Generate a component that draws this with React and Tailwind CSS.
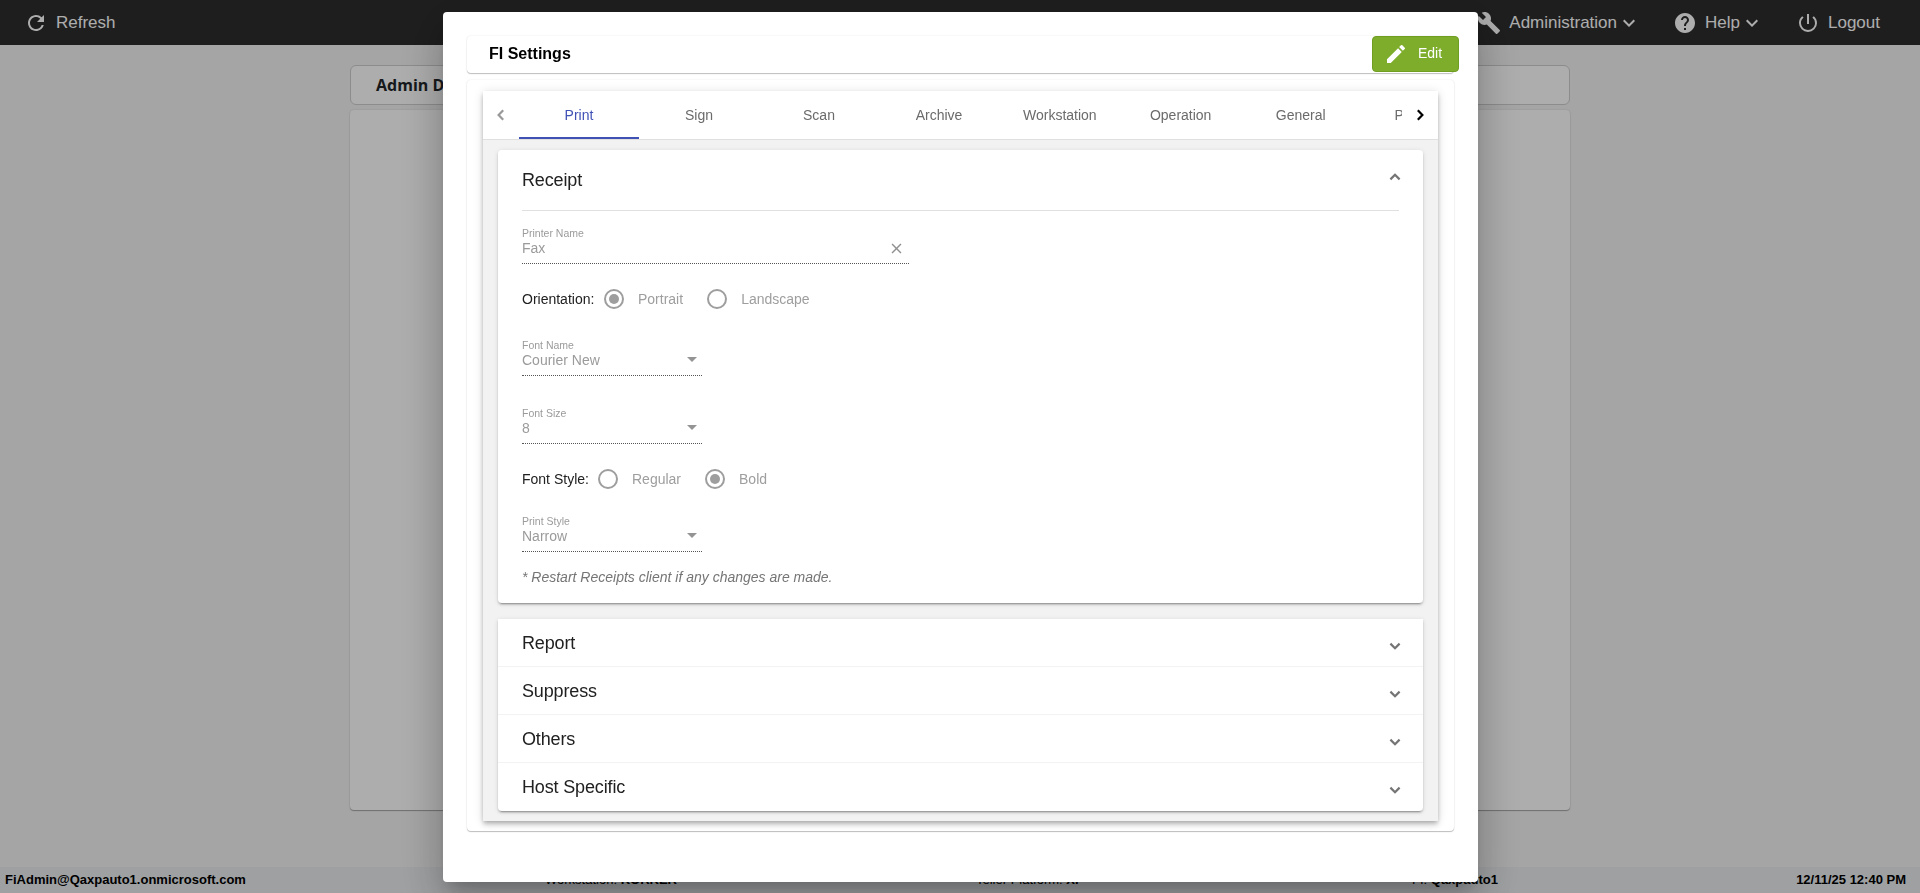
import {
  MdBuild,
  MdClose,
  MdEdit,
  MdExpandMore,
  MdHelp,
  MdPowerSettingsNew,
  MdRefresh,
} from "react-icons/md";

const TABS = [
  "Print",
  "Sign",
  "Scan",
  "Archive",
  "Workstation",
  "Operation",
  "General",
  "Platform",
];

const COLLAPSED_PANELS = ["Report", "Suppress", "Others", "Host Specific"];

/**
 * Small stroked chevron used by the tab paginator and the expansion panels
 */
function Chevron({ direction, className }) {
  const paths = {
    left: "M10.2 3.2 5.6 8l4.6 4.8",
    right: "M5.8 3.2 10.4 8l-4.6 4.8",
    up: "M3.4 10.4 8 5.8l4.6 4.6",
    down: "M3.4 5.6 8 10.2l4.6-4.6",
  };
  return (
    <svg
      viewBox="0 0 16 16"
      className={`h-4 w-4 ${className}`}
      fill="none"
      stroke="currentColor"
      strokeWidth="2.2"
    >
      <path d={paths[direction]} />
    </svg>
  );
}

function TopBar() {
  return (
    <header className="flex h-[45px] shrink-0 items-center justify-between bg-[#2d2d2d] pr-10 pl-6 text-[17px] leading-5 text-white">
      <div className="flex items-center gap-2">
        <MdRefresh className="size-6" />
        <span>Refresh</span>
      </div>
      <nav className="flex items-center">
        <div className="flex items-center">
          <MdBuild className="size-6" />
          <span className="ml-2">Administration</span>
          <MdExpandMore className="size-6" />
        </div>
        <div className="ml-8 flex items-center">
          <MdHelp className="size-6" />
          <span className="ml-2">Help</span>
          <MdExpandMore className="size-6" />
        </div>
        <div className="ml-8 flex items-center">
          <MdPowerSettingsNew className="size-6" />
          <span className="ml-2">Logout</span>
        </div>
      </nav>
    </header>
  );
}

function StatusBar() {
  return (
    <footer className="flex h-[26px] shrink-0 items-center bg-[#e9ecef] pr-3.5 pl-[5px] text-[13px] leading-4 text-black">
      <span className="w-[540px] font-bold">
        FiAdmin@Qaxpauto1.onmicrosoft.com
      </span>
      <span className="w-[431px]">
        Workstation: <b>KORKER</b>
      </span>
      <span className="w-[436px]">
        Teller Platform: <b>XP</b>
      </span>
      <span>
        FI: <b>Qaxpauto1</b>
      </span>
      <span className="ml-auto font-bold">12/11/25 12:40 PM</span>
    </footer>
  );
}

/**
 * Disabled form field with a floating label and a dotted underline
 */
function Field({ label, value, className, children }) {
  return (
    <div
      className={`flex items-end justify-between border-b border-dotted border-[#555555] pb-1.5 ${className}`}
    >
      <div className="text-[#9b9b9b]">
        <div className="text-[10.5px] leading-3">{label}</div>
        <div className="text-sm leading-[18px]">{value}</div>
      </div>
      {children}
    </div>
  );
}

function SelectField({ label, value, className }) {
  return (
    <Field label={label} value={value} className={`w-[180px] ${className}`}>
      <svg
        viewBox="0 0 10 5"
        className="mr-[5px] mb-[7px] h-[5px] w-2.5 text-[#949494]"
        fill="currentColor"
      >
        <path d="M0 0h10L5 5z" />
      </svg>
    </Field>
  );
}

function RadioRow({ label, options, value, labelClass, className }) {
  return (
    <div className={`flex h-6 items-center text-sm leading-5 ${className}`}>
      <span className={`text-[#212121] ${labelClass}`}>{label}</span>
      <div className="flex gap-6">
        {options.map((option) => (
          <div key={option} className="flex items-center gap-3.5">
            <span className="flex size-5 items-center justify-center rounded-full border-2 border-[#9e9e9e]">
              {option === value && (
                <span className="size-2.5 rounded-full bg-[#9e9e9e]" />
              )}
            </span>
            <span className="text-[#9e9e9e]">{option}</span>
          </div>
        ))}
      </div>
    </div>
  );
}

function ReceiptPanel() {
  return (
    <section className="h-[453px] rounded bg-white px-6 shadow-[0_3px_1px_-2px_rgba(0,0,0,0.2),0_2px_2px_0_rgba(0,0,0,0.14),0_1px_5px_0_rgba(0,0,0,0.12)]">
      <div className="flex h-[61px] items-center justify-between border-b border-[#e0e0e0]">
        <h2 className="text-lg leading-6 tracking-[-0.15px] text-[#212121]">
          Receipt
        </h2>
        <Chevron direction="up" className="-mr-1 mb-1.5 text-[#757575]" />
      </div>
      <Field label="Printer Name" value="Fax" className="mt-4 w-[387px]">
        <MdClose className="mr-1 size-[17px] text-[#8f8f8f]" />
      </Field>
      <RadioRow
        label="Orientation:"
        options={["Portrait", "Landscape"]}
        value="Portrait"
        labelClass="w-[82px]"
        className="mt-[23px]"
      />
      <SelectField label="Font Name" value="Courier New" className="mt-7" />
      <SelectField label="Font Size" value="8" className="mt-[31px]" />
      <RadioRow
        label="Font Style:"
        options={["Regular", "Bold"]}
        value="Bold"
        labelClass="w-[76px]"
        className="mt-[23px]"
      />
      <SelectField label="Print Style" value="Narrow" className="mt-6" />
      <p className="mt-[15px] text-sm leading-5 text-[#757575] italic">
        * Restart Receipts client if any changes are made.
      </p>
    </section>
  );
}

function TabBar() {
  return (
    <div className="flex h-[49px] border-b border-[#e0e0e0] bg-white">
      <div className="flex w-9 shrink-0 items-center justify-center">
        <Chevron direction="left" className="text-[#999999]" />
      </div>
      <div className="flex min-w-0 flex-1 overflow-hidden">
        {TABS.map((tab, index) => (
          <div
            key={tab}
            className={`flex min-w-[120px] shrink-0 items-center justify-center border-b-2 px-6 pt-0.5 text-sm leading-5 ${
              index === 0
                ? "border-[#3f51b5] text-[#3f51b5]"
                : "border-transparent text-[#6b6b6b]"
            }`}
          >
            {tab}
          </div>
        ))}
      </div>
      <div className="flex w-9 shrink-0 items-center justify-center">
        <Chevron direction="right" className="text-black" />
      </div>
    </div>
  );
}

function SettingsDialog() {
  return (
    <div className="mt-3 ml-[443px] h-[870px] w-[1035px] rounded bg-white p-6 shadow-[0_11px_15px_-7px_rgba(0,0,0,0.2),0_24px_38px_3px_rgba(0,0,0,0.14),0_9px_46px_8px_rgba(0,0,0,0.12)]">
      <div className="flex h-[37px] w-[987px] items-start justify-between rounded pl-[22px] shadow-[0_1px_1px_rgba(0,0,0,0.24),0_0_2px_rgba(0,0,0,0.1)]">
        <h1 className="pt-2 text-base leading-5 font-bold text-black">
          FI Settings
        </h1>
        <button className="-mr-[5px] flex h-9 w-[87px] items-center rounded border border-[#6f9e23] bg-[#7dad2b] pl-[11px] text-sm leading-5 text-white">
          <MdEdit className="size-6" />
          <span className="ml-2.5 pb-0.5">Edit</span>
        </button>
      </div>
      <div className="mt-[7px] h-[751px] w-[987px] rounded px-4 pt-[11px] shadow-[0_1px_1px_rgba(0,0,0,0.24),0_0_2px_rgba(0,0,0,0.1)]">
        <div className="h-[730px] bg-[#f2f2f2] shadow-[0_2px_4px_-1px_rgba(0,0,0,0.2),0_4px_5px_0_rgba(0,0,0,0.14),0_1px_10px_0_rgba(0,0,0,0.12)]">
          <TabBar />
          <div className="px-[15px] pt-2.5">
            <ReceiptPanel />
            <div className="mt-4 divide-y divide-[#f3f3f3] rounded-b bg-white shadow-[0_3px_1px_-2px_rgba(0,0,0,0.2),0_2px_2px_0_rgba(0,0,0,0.14),0_1px_5px_0_rgba(0,0,0,0.12)]">
              {COLLAPSED_PANELS.map((panel) => (
                <div
                  key={panel}
                  className="flex h-12 items-center justify-between px-6"
                >
                  <h2 className="text-lg leading-6 tracking-[-0.15px] text-[#212121]">
                    {panel}
                  </h2>
                  <Chevron
                    direction="down"
                    className="mt-1.5 -mr-1 text-[#757575]"
                  />
                </div>
              ))}
            </div>
          </div>
        </div>
      </div>
    </div>
  );
}

export default function App() {
  return (
    <div className="flex h-screen flex-col overflow-hidden bg-[#f3f3f3] font-['Liberation_Sans',Arial,sans-serif]">
      <TopBar />
      <main className="mx-auto flex w-[1220px] flex-1 flex-col pt-5">
        <div className="h-10 rounded-md border border-[#cfcfcf] bg-white px-[25px] font-['Open_Sans',sans-serif] text-base leading-[38px] font-bold text-[#212529]">
          Admin Dashboard
        </div>
        <div className="mt-[5px] h-[700px] rounded bg-white shadow-[0_1px_1px_rgba(0,0,0,0.3),0_0_2px_rgba(0,0,0,0.12)]" />
      </main>
      <StatusBar />
      {/* Modal backdrop */}
      <div className="fixed inset-0 overflow-hidden bg-black/32">
        <SettingsDialog />
      </div>
    </div>
  );
}
